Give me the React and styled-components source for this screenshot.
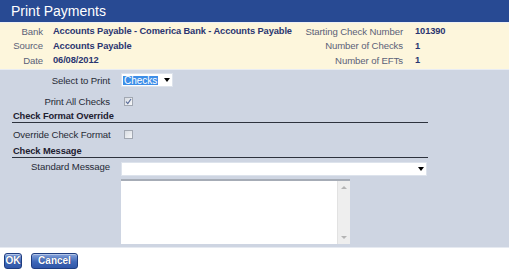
import React from 'react';
import styled, { createGlobalStyle } from 'styled-components';

const GlobalStyle = createGlobalStyle`
  body {
    margin: 0;
    background: #ffffff;
    font-family: "Liberation Sans", Arial, sans-serif;
  }
`;

const info = [
  { label: 'Bank', value: 'Accounts Payable - Comerica Bank - Accounts Payable', rLabel: 'Starting Check Number', rValue: '101390' },
  { label: 'Source', value: 'Accounts Payable', rLabel: 'Number of Checks', rValue: '1' },
  { label: 'Date', value: '06/08/2012', rLabel: 'Number of EFTs', rValue: '1' },
];

const App = () => {
  return (
    <Page>
      <GlobalStyle />
      <TitleBar>Print Payments</TitleBar>
      <InfoPanel>
        {info.map(row => (
          <React.Fragment key={row.label}>
            <InfoLabel>{row.label}</InfoLabel>
            <InfoValue>{row.value}</InfoValue>
            <InfoLabel>{row.rLabel}</InfoLabel>
            <InfoValue>{row.rValue}</InfoValue>
          </React.Fragment>
        ))}
      </InfoPanel>
      <FormPanel>
        <FieldRow height={14}>
          <FieldLabel>Select to Print</FieldLabel>
          <SelectBox width={52}>
            <Selected>Checks</Selected>
            <Arrow />
          </SelectBox>
        </FieldRow>
        <FieldRow height={15} gap={7}>
          <FieldLabel>Print All Checks</FieldLabel>
          <CheckBox>
            <svg width="7" height="7" viewBox="0 0 7 7">
              <path d="M1 3.6 L2.8 5.6 L6 1" fill="none" stroke="#5a6d9a" strokeWidth="1.2" />
            </svg>
          </CheckBox>
        </FieldRow>
        <Section>Check Format Override</Section>
        <FieldRow height={15} gap={4}>
          <FieldLabel align="left">Override Check Format</FieldLabel>
          <CheckBox />
        </FieldRow>
        <Section gap={2}>Check Message</Section>
        <FieldRow height={14} gap={4} top>
          <FieldLabel top>Standard Message</FieldLabel>
          <SelectBox width={306}>
            <span />
            <Arrow />
          </SelectBox>
        </FieldRow>
        <FieldRow height={65} gap={3}>
          <span />
          <TextArea>
            <TextBody />
            <ScrollBar>
              <ScrollArrow up />
              <ScrollArrow />
            </ScrollBar>
          </TextArea>
        </FieldRow>
      </FormPanel>
      <Buttons>
        <Button width={18}>OK</Button>
        <Button width={47}>Cancel</Button>
      </Buttons>
    </Page>
  );
};

const Page = styled.div`
  width: 509px;
  font-size: 9.6px;
  letter-spacing: -0.1px;
`;

const TitleBar = styled.div`
  height: 22px;
  background: #284a93;
  color: #ffffff;
  font-size: 14px;
  letter-spacing: 0;
  line-height: 22px;
  padding-left: 11px;
  border-bottom: 1px solid #eef0f4;
`;

const InfoPanel = styled.div`
  display: grid;
  grid-template-columns: 43px 240px 100px 1fr;
  column-gap: 10px;
  grid-auto-rows: 14.5px;
  align-items: center;
  padding: 1px 0 1px;
  background: #fdf6dc;
  border-bottom: 1px solid #e8ecf3;
  & > span:nth-child(4n + 3) {
    padding-left: 2px;
  }
  & > span:nth-child(4n) {
    padding-left: 2px;
  }
`;

const InfoLabel = styled.span`
  text-align: right;
  color: #5b6178;
  white-space: nowrap;
`;

const InfoValue = styled.span`
  font-weight: bold;
  font-size: 9.3px;
  color: #2a3570;
  white-space: nowrap;
`;

const FormPanel = styled.div`
  background: #ced5e2;
  padding: 3px 81px 3px 12px;
  border-bottom: 1px solid #e6eaf1;
`;

const FieldRow = styled.div`
  display: grid;
  grid-template-columns: 98px 1fr;
  column-gap: 11px;
  align-items: ${p => (p.top ? 'start' : 'center')};
  height: ${p => p.height}px;
  margin-top: ${p => p.gap || 0}px;
`;

const FieldLabel = styled.span`
  text-align: ${p => p.align || 'right'};
  color: #262a36;
  white-space: nowrap;
  line-height: ${p => (p.top ? '9px' : '15px')};
  padding-left: ${p => (p.align === 'left' ? '1px' : '0')};
`;

const SelectBox = styled.div`
  width: ${p => p.width}px;
  height: 14px;
  box-sizing: border-box;
  background: #ffffff;
  border: 1px solid #dde3ec;
  display: flex;
  align-items: center;
  justify-content: space-between;
  padding: 0 2px 0 1px;
`;

const Selected = styled.span`
  background: #3d8ee8;
  color: #ffffff;
  padding: 0 1px;
  line-height: 9px;
  font-size: 10px;
  letter-spacing: 0;
`;

const Arrow = styled.span`
  width: 0;
  height: 0;
  border-left: 3px solid transparent;
  border-right: 3px solid transparent;
  border-top: 4px solid #000000;
`;

const CheckBox = styled.span`
  width: 9px;
  height: 9px;
  box-sizing: border-box;
  margin-left: 3px;
  border: 1px solid #a2a8b2;
  background: linear-gradient(135deg, #d8dce2, #f6f7f9);
  display: flex;
  align-items: center;
  justify-content: center;
`;

const Section = styled.div`
  font-weight: bold;
  font-size: 9.3px;
  color: #1d2030;
  line-height: 12px;
  padding: 1px 0 0 1px;
  border-bottom: 1px solid #2d323d;
  margin-top: ${p => p.gap || 0}px;
`;

const TextArea = styled.div`
  width: 229px;
  height: 65px;
  display: flex;
  background: #ffffff;
  border-top: 2px solid #a6acb6;
  box-sizing: border-box;
`;

const TextBody = styled.div`
  flex: 1;
`;

const ScrollBar = styled.div`
  width: 12px;
  background: #eeeeee;
  border-left: 1px solid #e2e2e2;
  display: flex;
  flex-direction: column;
  justify-content: space-between;
  align-items: center;
  padding: 5px 0 5px;
`;

const ScrollArrow = styled.span`
  width: 0;
  height: 0;
  border-left: 3px solid transparent;
  border-right: 3px solid transparent;
  ${p => (p.up ? 'border-bottom: 3px solid #b4b4b4;' : 'border-top: 3px solid #b4b4b4;')}
`;

const Buttons = styled.div`
  display: flex;
  gap: 9px;
  padding: 5px 4px 4px;
`;

const Button = styled.button`
  width: ${p => p.width}px;
  height: 16px;
  padding: 0;
  border: 1px solid #1f3d80;
  border-radius: 3px;
  background: linear-gradient(#86a4dc, #4068b8 55%, #2f56a8);
  color: #ffffff;
  font-family: "Liberation Sans", Arial, sans-serif;
  font-size: 10px;
  font-weight: bold;
  letter-spacing: 0;
  text-shadow: 0 0 1px #1a2f66;
  box-shadow: inset 0 1px 0 rgba(255, 255, 255, 0.4);
`;

export default App;
